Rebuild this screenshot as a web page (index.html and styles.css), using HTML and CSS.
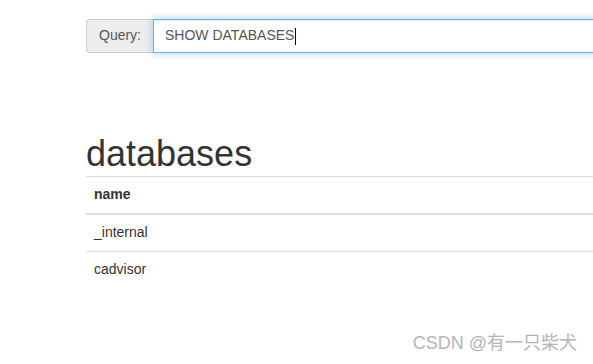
FILE: index.html
```html
<!DOCTYPE html>
<html lang="en">
<head>
    <meta charset="UTF-8">
    <meta name="viewport" content="width=device-width, initial-scale=1.0">
    <title>Query</title>
    <link rel="stylesheet" href="styles.css">
</head>
<body>
    <div class="container">
        <form class="query-form">
            <div class="input-group">
                <span class="addon">Query:</span>
                <div class="query-input">SHOW DATABASES<span class="caret"></span></div>
            </div>
        </form>

        <h1>databases</h1>
        <table class="table">
            <thead>
                <tr><th>name</th></tr>
            </thead>
            <tbody>
                <tr><td>_internal</td></tr>
                <tr><td>cadvisor</td></tr>
            </tbody>
        </table>
    </div>

    <div class="watermark">CSDN @有一只柴犬</div>
</body>
</html>
```

FILE: styles.css
```css
html, body {
    margin: 0;
    height: 100%;
    overflow: hidden;
}
body {
    font-family: "Liberation Sans", Arial, Helvetica, sans-serif;
    font-size: 14px;
    line-height: 1.42857;
    color: #333;
    background: #fff;
    position: relative;
}
.container {
    width: 700px;
    padding: 19px 0 0 86px;
}
.query-form {
    margin: 0;
}
.input-group {
    display: flex;
    height: 34px;
}
.addon {
    display: flex;
    align-items: center;
    padding: 0 12px;
    color: #555;
    background: #eee;
    border: 1px solid #ccc;
    border-right: 0;
    border-radius: 4px 0 0 4px;
}
.query-input {
    flex: 1;
    display: flex;
    align-items: center;
    padding: 0 11px;
    color: #555;
    background: #fff;
    border: 1px solid #66afe9;
    box-shadow: inset 0 1px 1px rgba(0,0,0,.075), 0 0 8px rgba(102,175,233,.6);
}
.caret {
    display: inline-block;
    width: 1px;
    height: 17px;
    background: #000;
    margin-left: 1px;
}
h1 {
    font-size: 36px;
    font-weight: 500;
    line-height: 1.1;
    margin: 81px 0 2px;
}
.table {
    width: 100%;
    border-collapse: collapse;
    border-spacing: 0;
}
.table th, .table td {
    padding: 8px;
    text-align: left;
    border-top: 1px solid #ddd;
}
.table th {
    font-weight: bold;
    border-bottom: 2px solid #ddd;
}
.table tbody tr:first-child td {
    border-top: 0;
}
.watermark {
    position: absolute;
    right: 16px;
    bottom: 7px;
    font-family: "Liberation Sans", Arial, "Noto Sans CJK SC", sans-serif;
    font-size: 18px;
    color: #b5b5b5;
}
```
